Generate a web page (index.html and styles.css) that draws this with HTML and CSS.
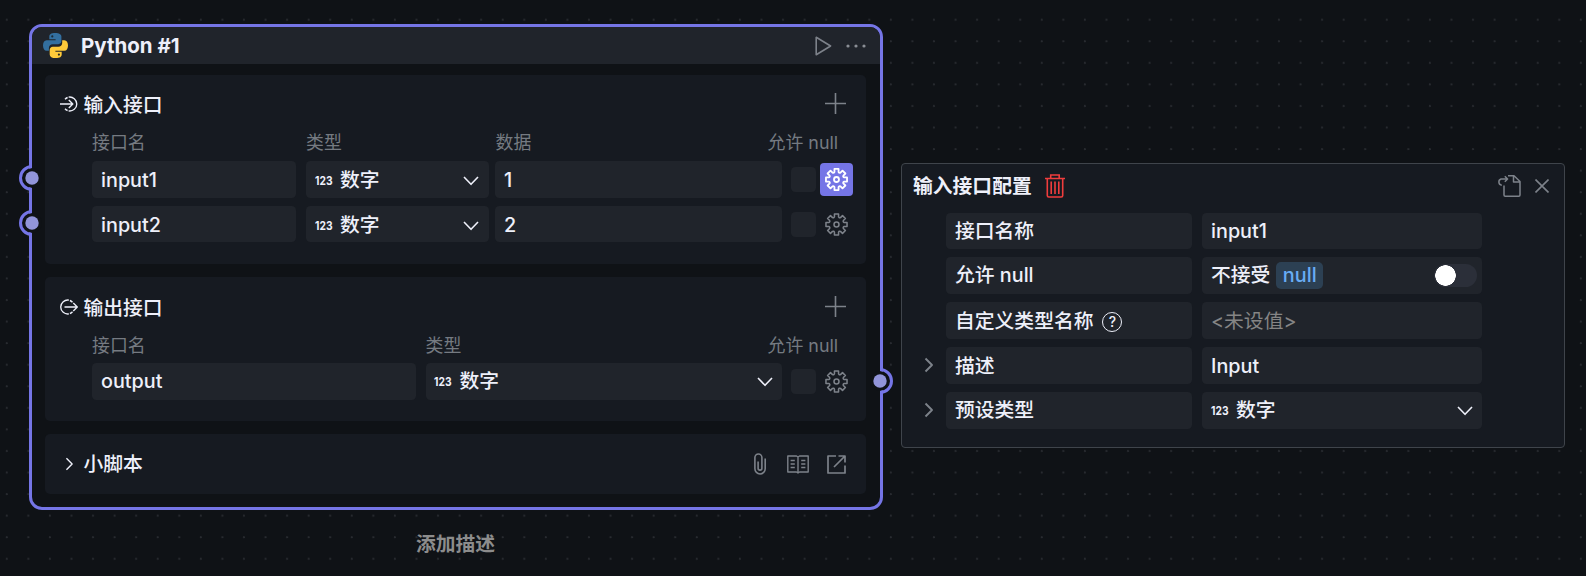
FILE: index.html
```html
<!DOCTYPE html>
<html lang="zh-CN">
<head>
<meta charset="utf-8">
<title>Python #1</title>
<link rel="stylesheet" href="styles.css">
</head>
<body>
<svg class="defs" width="0" height="0" aria-hidden="true">
  <symbol id="gear" viewBox="-12 -12 24 24"><path d="M-2.140-8V-11H2.140V-8Q2.680-6.500 4.150-7.170L6.270-9.290 9.290-6.270 7.170-4.150Q6.500-2.680 8-2.140H11V2.140H8Q6.500 2.680 7.170 4.150L9.290 6.270 6.270 9.290 4.150 7.170Q2.680 6.500 2.140 8V11H-2.140V8Q-2.680 6.500-4.150 7.170L-6.270 9.290-9.290 6.270-7.170 4.150Q-6.500 2.680-8 2.140H-11V-2.140H-8Q-6.500-2.680-7.170-4.150L-9.290-6.270-6.270-9.290-4.150-7.170Q-2.680-6.500-2.140-8z"/><circle r="2.600"/></symbol>
  <symbol id="down" viewBox="0 0 16 10"><path d="M1 1l7 7.300L15 1"/></symbol>
  <symbol id="right" viewBox="0 0 10 16"><path d="M1.500 1.500L8 8l-6.500 6.500"/></symbol>
  <symbol id="plus" viewBox="0 0 21 21"><path d="M10.500 0v21M0 10.500h21"/></symbol>
</svg>
<main class="canvas">
  <article class="node">
    <header class="node-head">
      <svg class="python" viewBox="0 0 25 25"><path fill="#336f9f" d="M12.300 0C8 0 6.300 1.400 6.300 3.600v2.700h6.300v.9H3.700C1.200 7.200 0 9.500 0 12.500s1.300 5.300 3.600 5.300h2.300v-2.900c0-2.100 1.700-3.700 3.800-3.700h5.600c1.800 0 3.100-1.400 3.100-3.100V3.600C18.400 1.200 16 0 12.300 0z"/><circle cx="9.300" cy="3.400" r="1.100" fill="#1c2a35"/><path fill="#ffcb3a" d="M12.700 25c4.300 0 6-1.400 6-3.600v-2.700h-6.300v-.9h8.900c2.500 0 3.700-2.300 3.700-5.300s-1.300-5.300-3.600-5.300h-2.200v2.900c0 2.100-1.700 3.700-3.800 3.700H9.800c-1.800 0-3.100 1.400-3.100 3.100v4.500C6.700 23.800 9 25 12.700 25z"/><circle cx="15.900" cy="21.600" r="1.100" fill="#2a2a20"/></svg>
      <h1 class="node-title">Python #1</h1>
      <svg class="line play" viewBox="0 0 17 20"><path d="M1.200 1.300v17.400L15.600 10z"/></svg>
      <svg class="more" viewBox="0 0 20 4"><circle cx="2" cy="2" r="1.600"/><circle cx="10" cy="2" r="1.600"/><circle cx="18" cy="2" r="1.600"/></svg>
    </header>
    <div class="node-body">
      <section class="section inputs">
        <div class="section-head">
          <svg class="line bright io" viewBox="0 0 18 16"><path d="M0 8h12.500M8.800 4l4 4-4 4M5 3.300A7 7 0 0 1 7.600 1.500M8.600 1.100A7 7 0 1 1 8.600 14.900M7.600 14.500A7 7 0 0 1 5 12.700"/></svg>
          <h2 class="section-title">输入接口</h2>
          <svg class="line plus"><use href="#plus"/></svg>
        </div>
        <div class="labels"><span>接口名</span><span>类型</span><span>数据</span><span class="allow">允许 null</span></div>
        <div class="row">
          <div class="field name">input1</div>
          <div class="field select"><svg class="num" viewBox="0 0 18 10"><text x="0" y="9.300" textLength="17.500" lengthAdjust="spacingAndGlyphs">123</text></svg><span>数字</span><svg class="line bright down"><use href="#down"/></svg></div>
          <div class="field data">1</div>
          <i class="check"></i>
          <button class="gear active"><svg class="line"><use href="#gear"/></svg></button>
        </div>
        <div class="row">
          <div class="field name">input2</div>
          <div class="field select"><svg class="num" viewBox="0 0 18 10"><text x="0" y="9.300" textLength="17.500" lengthAdjust="spacingAndGlyphs">123</text></svg><span>数字</span><svg class="line bright down"><use href="#down"/></svg></div>
          <div class="field data">2</div>
          <i class="check"></i>
          <button class="gear"><svg class="line"><use href="#gear"/></svg></button>
        </div>
      </section>
      <section class="section outputs">
        <div class="section-head">
          <svg class="line bright io" viewBox="0 0 18 16"><path d="M4.500 8h12.500M13.300 4l4 4-4 4M12.500 3.300A7 7 0 0 0 9.900 1.500M8.900 1.100A7 7 0 1 0 8.900 14.900M9.900 14.500A7 7 0 0 0 12.500 12.700"/></svg>
          <h2 class="section-title">输出接口</h2>
          <svg class="line plus"><use href="#plus"/></svg>
        </div>
        <div class="labels"><span>接口名</span><span>类型</span><span class="allow">允许 null</span></div>
        <div class="row">
          <div class="field name">output</div>
          <div class="field select"><svg class="num" viewBox="0 0 18 10"><text x="0" y="9.300" textLength="17.500" lengthAdjust="spacingAndGlyphs">123</text></svg><span>数字</span><svg class="line bright down"><use href="#down"/></svg></div>
          <i class="check"></i>
          <button class="gear"><svg class="line"><use href="#gear"/></svg></button>
        </div>
      </section>
      <section class="section script">
        <svg class="line bright fold"><use href="#right"/></svg>
        <h2 class="section-title">小脚本</h2>
        <svg class="line clip" viewBox="0 0 12 22"><path d="M11.200 5.500v10.300a5.100 5.100 0 0 1-10.300 0V4.500a3.500 3.500 0 0 1 7 0v10.700a1.900 1.900 0 0 1-3.800 0V8.500"/></svg>
        <svg class="line book" viewBox="0 0 22 19"><path d="M.8 1h8.700L11 2l1.500-1h8.700v16h-8.700L11 18l-1.500-1H.8zM11 2v16M3.600 5.500h4.200M3.600 9h4.200M3.600 12.500h4.200M14.200 5.500h4.200M14.200 9h4.200M14.200 12.500h4.200"/></svg>
        <svg class="line open" viewBox="0 0 19 19"><path d="M9 1H1v17h17v-7.500M11.500 1H18v6.500M18 1L7 12"/></svg>
      </section>
    </div>
    <svg class="port in first" viewBox="0 0 26 26"><circle cx="13" cy="13" r="10"/><path d="M13 1.500a11.500 11.500 0 0 0 0 23"/><circle class="pin" cx="13" cy="13" r="6.700"/></svg>
    <svg class="port in second" viewBox="0 0 26 26"><circle cx="13" cy="13" r="10"/><path d="M13 1.500a11.500 11.500 0 0 0 0 23"/><circle class="pin" cx="13" cy="13" r="6.700"/></svg>
    <svg class="port out" viewBox="0 0 26 26"><circle cx="13" cy="13" r="10"/><path d="M13 1.500a11.500 11.500 0 0 1 0 23"/><circle class="pin" cx="13" cy="13" r="6.700"/></svg>
  </article>
  <p class="caption">添加描述</p>

  <aside class="panel">
    <header class="panel-head">
      <h2 class="panel-title">输入接口配置</h2>
      <svg class="trash" viewBox="0 0 20 24"><path d="M0 4.500h20M5.700 4V1h8.500v3M2.300 5v16.500q0 1.500 1.500 1.500h12.400q1.500 0 1.500-1.500V5M6.200 7.500v12.500M10 7.500v12.500M13.800 7.500v12.500"/></svg>
      <svg class="line import" viewBox="0 0 24 22"><path d="M7 10.500V20q0 1.200 1.200 1.200h13.600q1.200 0 1.200-1.200V6.500L17 .8h-6M16.500 1v6H23M4.800 10.200A3.200 3.200 0 0 1 4 4h6.500M7.800 1.200L10.600 4 7.800 6.800"/></svg>
      <svg class="line close" viewBox="0 0 14 14"><path d="M.5.5l13 13M13.500.5l-13 13"/></svg>
    </header>
    <div class="props">
      <i></i><div class="field">接口名称</div><div class="field">input1</div>
      <i></i><div class="field">允许 null</div><div class="field toggle"><span>不接受</span><code class="tag">null</code><b class="switch"></b></div>
      <i></i><div class="field low">自定义类型名称<span class="help">?</span></div><div class="field unset low">&lt;未设值&gt;</div>
      <svg class="line fold"><use href="#right"/></svg><div class="field low">描述</div><div class="field low">Input</div>
      <svg class="line fold"><use href="#right"/></svg><div class="field">预设类型</div><div class="field select"><svg class="num" viewBox="0 0 18 10"><text x="0" y="9.300" textLength="17.500" lengthAdjust="spacingAndGlyphs">123</text></svg><span>数字</span><svg class="line bright down"><use href="#down"/></svg></div>
    </div>
  </aside>
</main>
</body>
</html>
```
FILE: styles.css
```css
* { box-sizing: border-box; }
body { margin: 0; background: #0f1216; color: #eef0fa; font: 500 19.800px/1 Inter, "Noto Sans CJK SC", sans-serif; }
h1, h2, p { margin: 0; font: inherit; }
svg { display: block; flex: none; }
.defs { position: absolute; }
.canvas {
  position: relative; width: 1586px; height: 576px; overflow: hidden;
  background: radial-gradient(circle at 6.700px 19.800px, #282b30 0.700px, transparent 1.400px) 0 0 / 21.570px 21.570px;
}
.line { fill: none; stroke: #7d828a; stroke-width: 1.600; stroke-linejoin: round; }
.bright { stroke: #eef0fa; }

/* Node */
.node { position: absolute; left: 29px; top: 24px; width: 854px; height: 486px; border: 3px solid #7575e6; border-radius: 13px; background: #0f1216; }
.node-head { display: flex; align-items: center; height: 37px; padding: 0 14px 0 11px; background: #20242b; border-radius: 10px 10px 0 0; }
.python { width: 25px; height: 25px; }
.node-title { flex: 1; margin-left: 13px; padding-top: 2px; font-weight: 700; font-size: 20.500px; }
.play { width: 17px; height: 20px; margin-right: 14px; }
.more { width: 20px; height: 4px; fill: #8a8e95; }
.node-body { display: flex; flex-direction: column; gap: 13px; padding: 11px 14px 0 13px; }
.section { background: #161a21; border-radius: 5px; }
.inputs { height: 189px; }
.outputs { height: 144px; }
.section-head { display: flex; align-items: center; height: 57px; padding: 0 20.500px 0 14.800px; }
.outputs .section-head { height: 58px; }
.io { width: 18px; height: 16px; margin: 1px 5.700px 0 0; stroke-width: 1.350; }
.section-title { flex: 1; padding-top: 4px; }
.outputs .section-title { padding-top: 5px; }
.plus { width: 21px; height: 21px; }
.labels { display: grid; align-items: center; height: 21px; padding-left: 47px; color: #757a81; font-size: 17.900px; font-weight: 400; }
.inputs .labels { grid-template-columns: 214px 189.500px 272px 80px; }
.outputs .labels { grid-template-columns: 333.500px 342px 80px; }
.allow { white-space: nowrap; }
.row { display: flex; align-items: center; padding-left: 47px; }
.labels + .row { margin-top: 8px; }
.outputs .labels + .row { margin-top: 7px; }
.row + .row { margin-top: 8.300px; }
.field { display: flex; align-items: center; height: 36.500px; padding: 1.500px 9px 0; background: #20242b; border-radius: 4.500px; white-space: nowrap; }
.row .field { padding-top: 3px; }
.outputs .row .field { padding-top: 1.500px; }
.field.low { padding-top: 3px; }
.name { width: 204px; margin-right: 10px; }
.row .select { width: 183px; margin-right: 6px; }
.data { width: 286.500px; }
.outputs .name { width: 323.500px; }
.outputs .select { width: 356px; margin-right: 0; }
.field.select { padding-left: 8.500px; }
.inputs .select { padding-right: 10px; }
.num { width: 18px; height: 10px; margin-right: 7.500px; fill: #eef0fa; font: 700 12px Inter, sans-serif; overflow: visible; }
.down { width: 16px; height: 10px; margin-left: auto; stroke-width: 1.600; }
.check { width: 25px; height: 25px; margin: 0 4px 0 9px; background: #20242b; border-radius: 4.500px; }
.gear { display: flex; align-items: center; justify-content: center; width: 33px; height: 33px; padding: 0; border: 0; border-radius: 4px; background: none; }
.gear svg { width: 23px; height: 23px; }
.active { background: #7575e6; }
.active svg { stroke: #fff; stroke-width: 1.900; }
.script { display: flex; align-items: center; height: 60px; padding: 0 20px 0 19.500px; }
.script .section-title { padding-top: 2px; }
.fold { width: 9px; height: 14px; }
.script .fold { margin-right: 10px; }
.clip { width: 12px; height: 22px; margin-right: 21px; }
.book { width: 22px; height: 19px; margin-right: 18px; stroke-width: 1.400; }
.open { width: 19px; height: 19px; stroke-width: 1.700; }
.port { position: absolute; width: 26px; height: 26px; fill: #0f1216; }
.port path { fill: none; stroke: #7575e6; stroke-width: 3; }
.port .pin { fill: #9295da; }
.in { left: -13px; }
.first { top: 137.700px; }
.second { top: 182.500px; }
.out { left: 834.500px; top: 341px; }
.caption { position: absolute; left: 416px; top: 535px; color: #8c8c8c; font-weight: 700; }

/* Port settings */
.panel { position: absolute; left: 901px; top: 163px; width: 664px; height: 285px; border: 1px solid #3f444b; border-radius: 4px; background: #161a21; }
.panel-head { display: flex; align-items: center; height: 48.500px; padding: 0 15px 4px 11px; }
.panel-title { font-weight: 700; padding-top: 2px; }
.trash { width: 20px; height: 24px; margin-left: 13px; fill: none; stroke: #ef3d3d; stroke-width: 1.600; }
.import { width: 24px; height: 22px; margin: 0 14px 0 auto; stroke-width: 1.500; }
.close { width: 14px; height: 14px; }
.props { display: grid; grid-template-columns: 12px 246px 280px; column-gap: 10px; row-gap: 8.400px; padding-left: 22px; align-items: center; }
.props .fold { width: 10px; height: 16px; stroke-width: 1.900; }
.field.toggle { padding-top: 0; }
.tag { display: flex; align-items: center; height: 27px; margin-left: 6px; padding: 0 6.500px; border-radius: 5px; background: #2c4053; color: #68adf5; font: inherit; }
.switch { width: 43px; height: 23px; margin: 0 -4px 0 auto; border-radius: 12px; background: radial-gradient(circle at 11.500px 11.500px, #fff 10px, transparent 10.500px) #2b2f39; }
.help { display: flex; align-items: center; justify-content: center; width: 20px; height: 20px; margin-left: 9px; border: 1.500px solid #eef0fa; border-radius: 50%; font-size: 14px; }
.unset { color: #858585; font-weight: 400; }
```
